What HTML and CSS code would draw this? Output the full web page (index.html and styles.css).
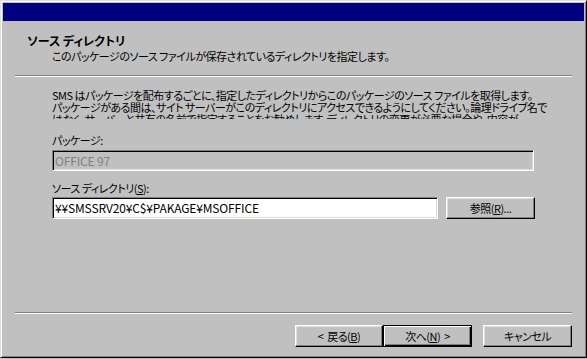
FILE: index.html
```html
<!DOCTYPE html>
<html lang="ja">
  <head>
    <meta charset="UTF-8">
    <title>ソース ディレクトリ</title>
    <link rel="stylesheet" href="styles.css">
  </head>
  <body>
    <div class="window">
      <div class="titlebar"></div>

      <div class="header">
        <div class="header-title">ソース ディレクトリ</div>
        <div class="header-sub">このパッケージのソース ファイルが保存されているディレクトリを指定します。</div>
      </div>
      <div class="sep"></div>

      <div class="content">
        <div class="desc">
          <div>SMS はパッケージを配布するごとに、指定したディレクトリからこのパッケージのソース ファイルを取得します。</div>
          <div>パッケージがある間は、サイト サーバーがこのディレクトリにアクセスできるようにしてください。論理ドライブ名で</div>
          <div>はなく、サーバーと共有の名前で指定することをお勧めします。ディレクトリの変更が必要な場合や、内容が</div>
        </div>

        <div class="field-label">パッケージ:</div>
        <div class="textbox disabled">OFFICE 97</div>

        <div class="field-label second">ソース ディレクトリ(<u>S</u>):</div>
        <div class="field-row">
          <div class="textbox path">¥¥SMSSRV20¥C$¥PAKAGE¥MSOFFICE</div>
          <button type="button" class="btn browse">参照(<u>R</u>)...</button>
        </div>
      </div>

      <div class="sep bottom"></div>
      <div class="buttons">
        <button type="button" class="btn">&lt;&nbsp;戻る(<u>B</u>)</button>
        <button type="button" class="btn default">次へ(<u>N</u>)&nbsp;&gt;</button>
        <button type="button" class="btn cancel">キャンセル</button>
      </div>
    </div>
  </body>
</html>
```

FILE: styles.css
```css
body {
  margin: 0;
  background: #c0c0c0;
  font-family: "Noto Sans CJK JP", sans-serif;
  font-size: 11px;
  letter-spacing: -0.5px;
  font-feature-settings: "palt";
  color: #000;
}

.window {
  width: 587px;
  height: 358px;
  box-sizing: border-box;
  padding: 2px;
  border: 1px solid;
  border-color: #dfdfdf #000 #000 #dfdfdf;
  box-shadow: inset 1px 1px #fff, inset -1px -1px #808080;
  display: flex;
  flex-direction: column;
}

.titlebar {
  height: 18px;
  background: #000080;
}

.header {
  padding-left: 24px;
  margin-top: 13px;
  line-height: 14px;
}

.header-title {
  font-size: 12px;
  font-weight: bold;
  letter-spacing: 0;
}

.header-sub {
  margin-left: 25px;
  margin-top: 1px;
}

.sep {
  margin: 12px 12px 0;
  border-top: 1px solid #808080;
  border-bottom: 1px solid #fff;
}

.content {
  padding-left: 49px;
}

.desc {
  margin-top: 12px;
  height: 30px;
  overflow: hidden;
  line-height: 12px;
  white-space: nowrap;
}

.field-label {
  margin-top: 15px;
  line-height: 12px;
}

.field-label.second {
  margin-top: 11px;
}

.textbox {
  box-sizing: border-box;
  height: 21px;
  width: 482px;
  margin-top: 4px;
  padding-left: 2px;
  font-size: 12px;
  letter-spacing: -0.15px;
  line-height: 19px;
  background: #fff;
  border: 1px solid;
  border-color: #808080 #fff #fff #808080;
  box-shadow: inset 1px 1px #000, inset -1px -1px #dfdfdf;
}

.textbox.disabled {
  background: #c0c0c0;
  color: #808080;
}

.field-row {
  display: flex;
  gap: 8px;
  margin-top: 3px;
}

.field-row .textbox {
  margin-top: 0;
  width: 386px;
  height: 22px;
  line-height: 20px;
}

.btn {
  box-sizing: border-box;
  width: 88px;
  height: 22px;
  padding: 0;
  font: inherit;
  letter-spacing: inherit;
  word-spacing: 2px;
  color: #000;
  background: #c0c0c0;
  border: 1px solid;
  border-color: #fff #000 #000 #fff;
  box-shadow: inset -1px -1px #808080, inset 1px 1px #dfdfdf;
}

.btn.browse {
  width: 89px;
}

.btn.default {
  width: 89px;
  border-color: #000;
  box-shadow: inset 1px 1px #fff, inset -1px -1px #000, inset -2px -2px #808080;
}

.btn.cancel {
  width: 89px;
  margin-left: 11px;
}

.sep.bottom {
  margin-top: auto;
}

.buttons {
  display: flex;
  justify-content: flex-end;
  padding: 11px 12px 8px 0;
}
```
